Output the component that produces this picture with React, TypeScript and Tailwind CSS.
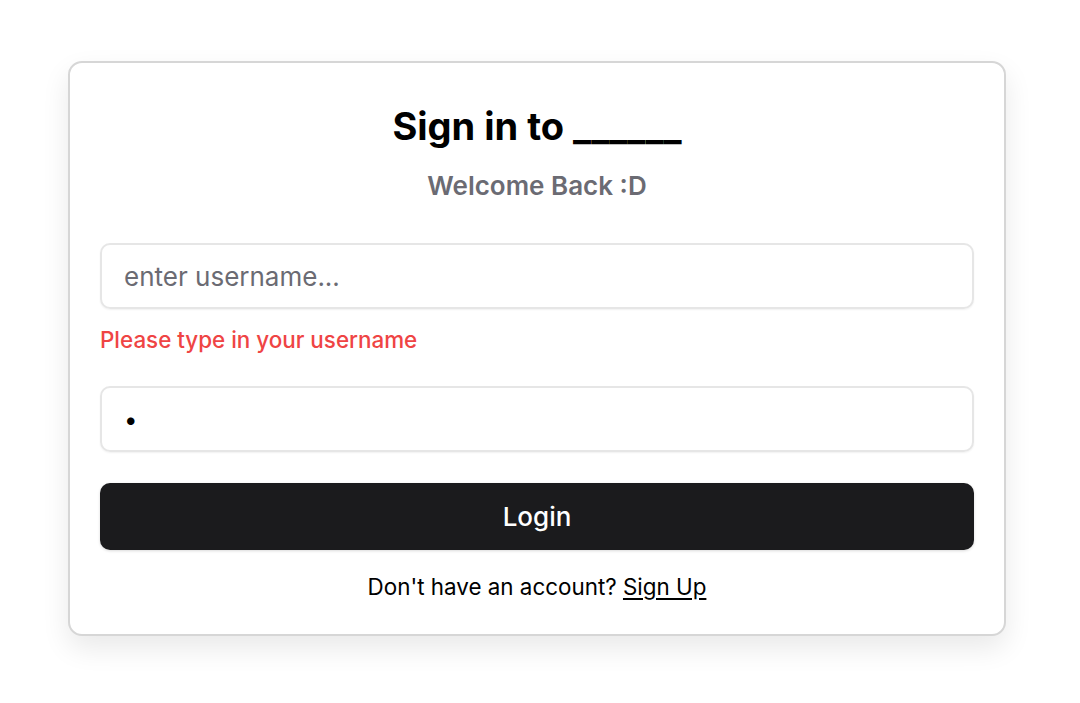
import { useState } from "react";

export default function App() {
  const [username, setUsername] = useState("");
  const [password, setPassword] = useState("a");

  return (
    <div className="min-h-screen bg-white" style={{ fontFamily: "Inter, 'Noto Sans', sans-serif" }}>
      <div className="pl-[68px] pt-[61px]">
        <div className="w-[938px] rounded-[14px] border-2 border-[#d6d6d6] bg-white px-[30px] pt-[41px] pb-[32px] shadow-[0_12px_28px_rgba(0,0,0,0.09)]">
          <h1 className="text-center text-[38px] leading-[44px] font-bold text-black">Sign in to ______</h1>
          <p className="mt-[22px] text-center text-[26px] leading-[32px] font-semibold text-[#6b6b73]">Welcome Back :D</p>

          <input
            value={username}
            onChange={(e) => setUsername(e.target.value)}
            placeholder="enter username..."
            className="mt-[41px] block h-[66px] w-full rounded-[10px] border-2 border-[#e6e6e6] px-[22px] text-[26px] text-black shadow-[0_1px_2px_rgba(0,0,0,0.06)] outline-none placeholder:text-[#6b6b73]"
          />
          <p className="mt-[17px] text-[22.4px] leading-[28px] font-medium text-[#ef4444]">Please type in your username</p>

          <input
            type="password"
            value={password}
            onChange={(e) => setPassword(e.target.value)}
            className="mt-[32px] block h-[66px] w-full rounded-[10px] border-2 border-[#e6e6e6] px-[22px] text-[24px] text-black shadow-[0_1px_2px_rgba(0,0,0,0.06)] outline-none"
          />

          <button className="mt-[31px] flex h-[67px] w-full items-center justify-center rounded-[10px] bg-[#1b1b1d] text-[26px] font-medium text-white shadow-[0_1px_3px_rgba(0,0,0,0.15)]">
            Login
          </button>

          <p className="mt-[22px] text-center text-[22.4px] leading-[30px] text-black">
            Don't have an account? <a href="#" className="underline underline-offset-[3px]">Sign Up</a>
          </p>
        </div>
      </div>
    </div>
  );
}
